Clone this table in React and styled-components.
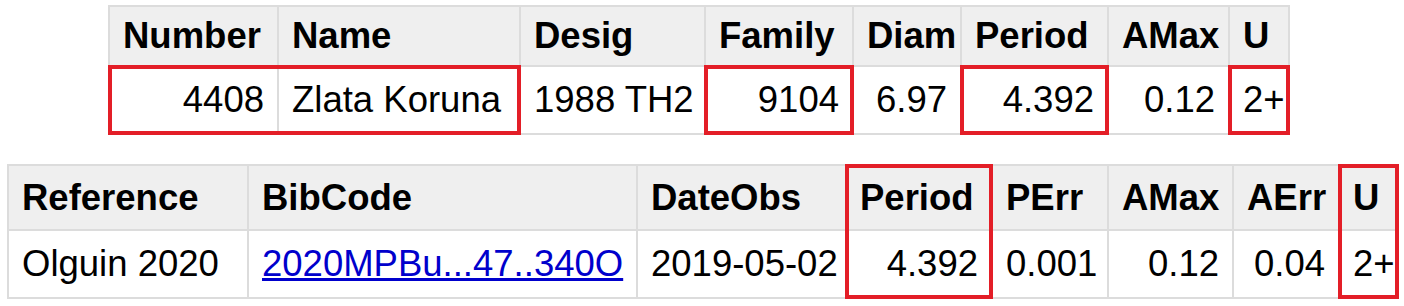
import React from "react";
import styled, { createGlobalStyle, css } from "styled-components";

const GlobalStyle = createGlobalStyle`
  html, body {
    margin: 0;
    padding: 0;
    background: #fff;
  }
  body {
    font-family: "Liberation Sans", Arial, sans-serif;
    color: #000;
  }
`;

const asteroid = {
  cols: [
    { label: "Number", w: 169 },
    { label: "Name", w: 242 },
    { label: "Desig", w: 185 },
    { label: "Family", w: 148 },
    { label: "Diam", w: 108 },
    { label: "Period", w: 147 },
    { label: "AMax", w: 121 },
    { label: "U", w: 60 },
  ],
  row: [
    { v: "4408", right: true, hl: "tbl" },
    { v: "Zlata Koruna", hl: "tbr" },
    { v: "1988 TH2" },
    { v: "9104", right: true, hl: "tblr" },
    { v: "6.97", right: true },
    { v: "4.392", right: true, hl: "tblr" },
    { v: "0.12", right: true },
    { v: "2+", hl: "tblr" },
  ],
};

const reference = {
  cols: [
    { label: "Reference", w: 240 },
    { label: "BibCode", w: 389 },
    { label: "DateObs", w: 209 },
    { label: "Period", w: 146, hl: "tlr" },
    { label: "PErr", w: 116 },
    { label: "AMax", w: 125 },
    { label: "AErr", w: 106 },
    { label: "U", w: 59, hl: "tlr" },
  ],
  row: [
    { v: "Olguin 2020" },
    { v: "2020MPBu...47..340O", link: true },
    { v: "2019-05-02" },
    { v: "4.392", right: true, hl: "blr" },
    { v: "0.001", right: true },
    { v: "0.12", right: true },
    { v: "0.04", right: true },
    { v: "2+", hl: "blr" },
  ],
};

const App = () => {
  return (
    <Page>
      <GlobalStyle />
      <DataTable data={asteroid} $left={108} $top={5} $head={60} />
      <DataTable data={reference} $left={7} $top={29} $head={65} />
    </Page>
  );
};

const DataTable = ({ data, $left, $top, $head }) => {
  const width = data.cols.reduce((s, c) => s + c.w, 0);
  return (
    <Table $left={$left} $top={$top} $width={width}>
      <colgroup>
        {data.cols.map((c) => (
          <Col key={c.label} $w={c.w} />
        ))}
      </colgroup>
      <thead>
        <HeadRow $h={$head}>
          {data.cols.map((c) => (
            <Th key={c.label} $hl={c.hl}>
              {c.label}
            </Th>
          ))}
        </HeadRow>
      </thead>
      <tbody>
        <BodyRow>
          {data.row.map((cell, i) => (
            <Td key={i} $right={cell.right} $hl={cell.hl}>
              {cell.link ? <BibLink href="#">{cell.v}</BibLink> : cell.v}
            </Td>
          ))}
        </BodyRow>
      </tbody>
    </Table>
  );
};

export default App;

const Page = styled.div`
  display: flex;
  flex-direction: column;
  align-items: flex-start;
`;

const Table = styled.table`
  border-collapse: collapse;
  table-layout: fixed;
  width: ${(p) => p.$width}px;
  margin: ${(p) => p.$top}px 0 0 ${(p) => p.$left}px;
  font-size: 36.5px;
`;

const Col = styled.col`
  width: ${(p) => p.$w}px;
`;

const HeadRow = styled.tr`
  height: ${(p) => p.$h}px;
  background: #efefef;
`;

const BodyRow = styled.tr`
  height: 68px;
  background: #fff;
`;

// red annotation frame drawn over a cell, sides picked by letters t/b/l/r
const highlight = css`
  ${(p) =>
    p.$hl &&
    css`
      &::after {
        content: "";
        position: absolute;
        top: -2px;
        bottom: -2px;
        left: -2px;
        right: -2px;
        border-style: solid;
        border-color: #e31e27;
        border-width: ${p.$hl.includes("t") ? 4 : 0}px
          ${p.$hl.includes("r") ? 4 : 0}px ${p.$hl.includes("b") ? 4 : 0}px
          ${p.$hl.includes("l") ? 4 : 0}px;
        pointer-events: none;
      }
    `}
`;

const cellBase = css`
  position: relative;
  border: 2px solid #dcdcdc;
  padding: 0 13px;
  white-space: nowrap;
  vertical-align: middle;
  line-height: 1.15;
`;

const Th = styled.th`
  ${cellBase}
  text-align: left;
  font-weight: 700;
  ${highlight}
`;

const Td = styled.td`
  ${cellBase}
  text-align: ${(p) => (p.$right ? "right" : "left")};
  font-weight: 400;
  ${highlight}
`;

const BibLink = styled.a`
  color: #0000cc;
  text-decoration: underline;
`;
